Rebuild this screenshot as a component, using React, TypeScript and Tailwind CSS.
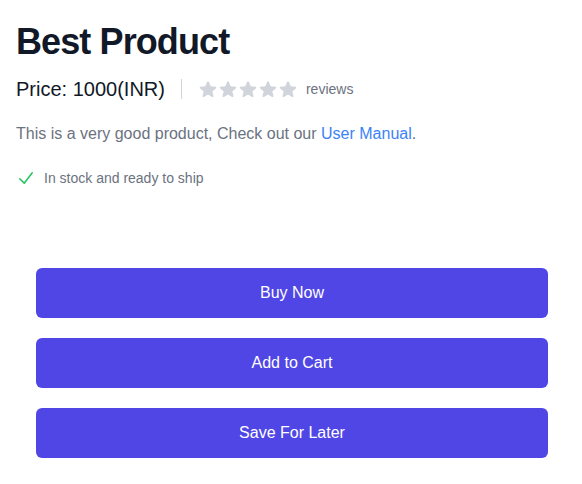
import React from "react";

function Star() {
  return (
    <svg viewBox="0 0 20 20" fill="currentColor" className="h-5 w-5 shrink-0 text-[#d1d5db]">
      <path
        fillRule="evenodd"
        d="M10.868 2.884c-.321-.772-1.415-.772-1.736 0l-1.83 4.401-4.753.381c-.833.067-1.171 1.107-.536 1.651l3.62 3.102-1.106 4.637c-.194.813.691 1.456 1.405 1.02L10 15.591l4.069 2.485c.713.436 1.598-.207 1.404-1.02l-1.106-4.637 3.62-3.102c.635-.544.297-1.584-.536-1.65l-4.752-.382-1.831-4.401z"
        clipRule="evenodd"
      />
    </svg>
  );
}

export default function App() {
  return (
    <div className="bg-white px-4 pt-[22px]" style={{ fontFamily: '"Liberation Sans", Arial, sans-serif' }}>
      <h1 className="text-[36px] leading-[40px] font-bold tracking-[-0.025em] text-[#111827]">Best Product</h1>
      <div className="mt-[13px] flex items-center">
        <p className="text-xl leading-7 text-[#111827]">Price: 1000(INR)</p>
        <div className="ml-4 flex items-center border-l border-[#d1d5db] pl-4 h-5">
          <div className="flex items-center">
            <Star />
            <Star />
            <Star />
            <Star />
            <Star />
          </div>
          <p className="ml-2 text-sm text-[#6b7280]">reviews</p>
        </div>
      </div>
      <p className="mt-[19px] text-base leading-6 text-[#6b7280]">
        This is a very good product, Check out our{" "}
        <a href="#" className="text-[#3b82f6]">User Manual</a>.
      </p>
      <div className="mt-[22px] flex items-center">
        <svg viewBox="0 0 20 20" fill="currentColor" className="h-5 w-5 shrink-0 text-[#22c55e]">
          <path
            fillRule="evenodd"
            d="M16.704 4.153a.75.75 0 01.143 1.052l-8 10.5a.75.75 0 01-1.127.075l-4.5-4.5a.75.75 0 011.06-1.06l3.894 3.893 7.48-9.817a.75.75 0 011.05-.143z"
            clipRule="evenodd"
          />
        </svg>
        <p className="ml-2 text-sm text-[#6b7280]">In stock and ready to ship</p>
      </div>
      <div className="mt-[80px] ml-5 mr-[18px] flex flex-col gap-5 pb-6">
        <button className="h-[50px] w-full rounded-md bg-[#4f46e5] text-base text-white">Buy Now</button>
        <button className="h-[50px] w-full rounded-md bg-[#4f46e5] text-base text-white">Add to Cart</button>
        <button className="h-[50px] w-full rounded-md bg-[#4f46e5] text-base text-white">Save For Later</button>
      </div>
    </div>
  );
}
